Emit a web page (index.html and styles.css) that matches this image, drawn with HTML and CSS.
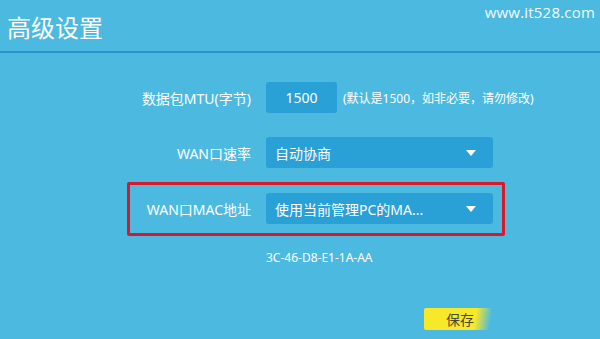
FILE: index.html
```html
<!DOCTYPE html>
<html lang="zh">
<head>
<meta charset="utf-8">
<link rel="stylesheet" href="styles.css">
</head>
<body>
<div class="page">
  <div class="watermark">www.it528.com</div>
  <header class="header">
    <h1 class="title">高级设置</h1>
  </header>
  <div class="form">
    <div class="row row-mtu">
      <div class="label">数据包MTU(字节)</div>
      <div class="input">1500</div>
      <div class="hint">(默认是1500，如非必要，请勿修改)</div>
    </div>
    <div class="row row-speed">
      <div class="label">WAN口速率</div>
      <div class="select"><span>自动协商</span><span class="arrow"></span></div>
    </div>
    <div class="highlight">
      <div class="row">
        <div class="label">WAN口MAC地址</div>
        <div class="select"><span>使用当前管理PC的MA...</span><span class="arrow"></span></div>
      </div>
    </div>
    <div class="mac">3C-46-D8-E1-1A-AA</div>
    <div class="actions">
      <div class="save">保存</div>
    </div>
  </div>
</div>
</body>
</html>
```
FILE: styles.css
```css
* { box-sizing: border-box; }
html, body {
  margin: 0;
  padding: 0;
  width: 600px;
  height: 339px;
  overflow: hidden;
  background: #4cb9e0;
  font-family: "Noto Sans", "Noto Sans CJK SC", sans-serif;
  color: #fff;
}
.page {
  position: relative;
  width: 600px;
  height: 339px;
}
.watermark {
  position: absolute;
  top: 2px;
  right: 5px;
  font-family: "Open Sans", "Noto Sans", sans-serif;
  font-size: 15px;
  color: #f4fbff;
  letter-spacing: 0.2px;
}
.header {
  padding: 10px 0 0 7px;
  height: 53px;
  border-bottom: 2px solid #2596cb;
}
.title {
  margin: 0;
  font-family: "Noto Sans CJK SC", sans-serif;
  font-size: 24px;
  font-weight: normal;
  line-height: 34px;
  color: #fff;
}
.form {
  padding-top: 29px;
  display: flex;
  flex-direction: column;
}
.row {
  display: flex;
  align-items: center;
  gap: 15px;
  height: 31px;
  margin-left: 130px;
}
.label {
  width: 121px;
  text-align: right;
  font-size: 14px;
  color: #fff;
  white-space: nowrap;
}
.input {
  width: 71px;
  height: 31px;
  background: #29a0d6;
  border-radius: 3px;
  display: flex;
  align-items: center;
  justify-content: center;
  font-size: 14px;
}
.row-mtu { gap: 0; }
.row-mtu .label { margin-right: 15px; }
.hint {
  margin-left: 6px;
  font-size: 12px;
  white-space: nowrap;
}
.row-speed { margin-top: 24px; }
.select {
  width: 227px;
  height: 31px;
  background: #29a0d6;
  border-radius: 3px;
  display: flex;
  align-items: center;
  justify-content: space-between;
  padding: 0 17px 0 9px;
  font-size: 14px;
  white-space: nowrap;
}
.arrow {
  width: 0;
  height: 0;
  border-left: 5px solid transparent;
  border-right: 5px solid transparent;
  border-top: 6px solid #fff;
}
.highlight {
  margin-top: 14px;
  margin-left: 127px;
  width: 378px;
  border: 3px solid #d8192b;
  border-radius: 2px;
  padding: 8px 0 9px 0;
}
.highlight .row { margin-left: 0; }
.mac {
  margin-top: 13px;
  margin-left: 266px;
  font-size: 12px;
  line-height: 18px;
}
.actions {
  margin-top: 41px;
  margin-left: 424px;
}
.save {
  width: 68px;
  height: 22px;
  background: linear-gradient(100deg, #f8e82a 0%, #f8e82a 74%, rgba(248,232,42,0) 96%);
  border-radius: 2px 0 0 2px;
  color: #4a4a2a;
  font-family: "Noto Sans CJK SC", sans-serif;
  font-size: 14px;
  line-height: 22px;
  padding-left: 22px;
}
```
